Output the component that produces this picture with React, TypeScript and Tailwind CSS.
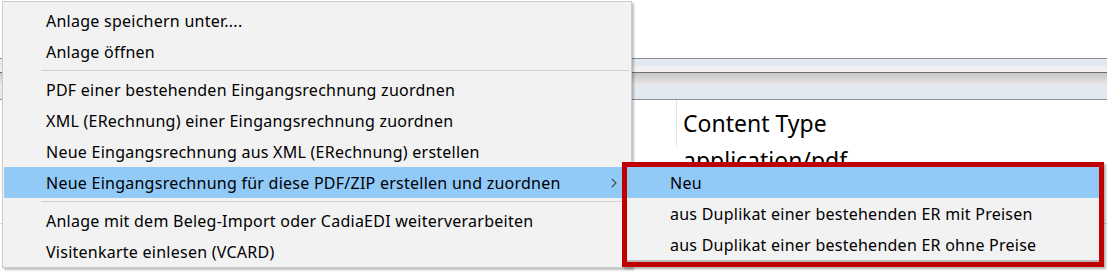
// Kontextmenü einer Anlage mit geöffnetem Untermenü.
import { ReactNode } from "react"

const mainItems: (string | null)[] = [
	"Anlage speichern unter....",
	"Anlage öffnen",
	null,
	"PDF einer bestehenden Eingangsrechnung zuordnen",
	"XML (ERechnung) einer Eingangsrechnung zuordnen",
	"Neue Eingangsrechnung aus XML (ERechnung) erstellen",
	"Neue Eingangsrechnung für diese PDF/ZIP erstellen und zuordnen",
	null,
	"Anlage mit dem Beleg-Import oder CadiaEDI weiterverarbeiten",
	"Visitenkarte einlesen (VCARD)",
]

const subItems = [
	"Neu",
	"aus Duplikat einer bestehenden ER mit Preisen",
	"aus Duplikat einer bestehenden ER ohne Preise",
]

function MenuRow({ active, children, pl }: { active?: boolean; children: ReactNode; pl: string }) {
	return (
		<div
			className={`mx-px flex h-[31px] items-center justify-between pr-[13px] ${pl} ${
				active ? "bg-[#91c9f7]" : ""
			}`}
		>
			{children}
		</div>
	)
}

function Chevron() {
	return (
		<svg width="6" height="10" viewBox="0 0 6 10" className="mt-px">
			<path d="M0.8 0.8 L5 5 L0.8 9.2" fill="none" stroke="#444" strokeWidth="1.1" />
		</svg>
	)
}

export default function App() {
	return (
		<div className="relative h-[277px] w-[1109px] overflow-hidden bg-white font-['Noto_Sans',sans-serif] text-[16px] tracking-[0.25px] text-black">
			{/* Fenster im Hintergrund */}
			<div className="flex flex-col pt-[58px] pr-[2px] tracking-normal">
				<div className="flex h-[42px] flex-col border-y border-[#8b8f98]">
					<div className="h-[7px] bg-[#e3e9f1]" />
					<div className="h-[7px] border-b border-[#707070] bg-[#f0f0f0]" />
					<div className="h-[13px] bg-gradient-to-b from-[#c6c6c6] to-[#ececec]" />
					<div className="flex-1 bg-[#e3e9f1]" />
				</div>
				<div className="flex h-[47px]">
					<div className="w-[677px] border-r border-[#e3e3e3]" />
					<div className="flex items-center pl-[6px] text-[23px] leading-none">Content Type</div>
				</div>
				<div className="flex h-[77px] border-b border-[#d8d8d8]">
					<div className="w-[683px]" />
					<div className="pt-[2px] text-[23px] leading-none">application/pdf</div>
				</div>
			</div>

			{/* Hauptmenü */}
			<div className="absolute top-px left-[2px] w-[630px] border border-[#cccccc] bg-[#f2f2f2] pt-[3px] shadow-[2px_2px_2px_rgba(0,0,0,0.25)]">
				{mainItems.map((item, i) =>
					item === null ? (
						<div key={i} className="mt-[3px] mb-[3px] ml-[38px] mr-[2px] h-px bg-[#d2d2d2]" />
					) : (
						<MenuRow key={i} pl="pl-[42px]" active={i === 6}>
							<span>{item}</span>
							{i === 6 && <Chevron />}
						</MenuRow>
					),
				)}
			</div>

			{/* Untermenü mit roter Markierung */}
			<div className="absolute top-[162px] left-[622px] w-[482px] border-[5px] border-[#c00000] shadow-[2px_2px_2px_rgba(0,0,0,0.3)]">
				<div className="border-b-2 border-[#b9b9b9] bg-[#f2f2f2]">
					{subItems.map((item, i) => (
						<div
							key={item}
							className={`flex h-[31px] items-center pl-[43px] ${i === 0 ? "bg-[#91c9f7]" : ""}`}
						>
							{item}
						</div>
					))}
				</div>
			</div>
		</div>
	)
}
